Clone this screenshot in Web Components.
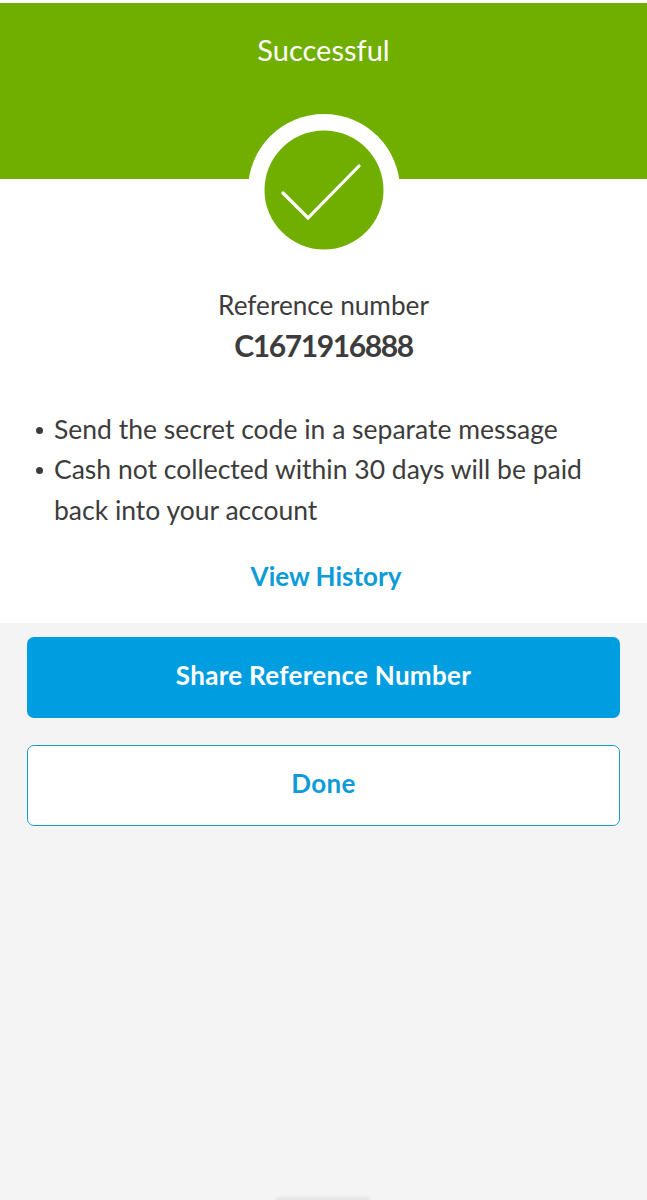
<!DOCTYPE html>
<html>
<head>
<meta charset="utf-8">
<title>Successful</title>
<style>
  html, body { margin: 0; height: 100%; }
  body { background: #f4f4f4; font-family: "Lato", "Liberation Sans", sans-serif; color: #3c3c3c; }
</style>
</head>
<body>
<result-page>
  <result-header title="Successful"></result-header>
  <result-body>
    <ref-number label="Reference number" value="C1671916888"></ref-number>
    <note-list>
      <li>Send the secret code in a separate message</li>
      <li>Cash not collected within 30 days will be paid back into your account</li>
    </note-list>
    <a>View History</a>
  </result-body>
  <action-button kind="primary">Share Reference Number</action-button>
  <action-button kind="outline">Done</action-button>
  <home-bar></home-bar>
</result-page>

<script>
class ResultPage extends HTMLElement {
  constructor() {
    super()
    this.attachShadow({ mode: "open" })
    this.shadowRoot.innerHTML = `
      <style>
        :host { display: flex; flex-direction: column; position: relative; height: 1200px; overflow: hidden; padding-top: 3px; box-sizing: border-box; background: #f4f4f4; }
        .top { height: 3px; background: #fff; position: absolute; top: 0; left: 0; right: 0; }
      </style>
      <div class="top"></div>
      <slot></slot>
    `
  }
}

class ResultHeader extends HTMLElement {
  constructor() {
    super()
    this.attachShadow({ mode: "open" })
    this.shadowRoot.innerHTML = `
      <style>
        :host { display: block; position: relative; height: 176px; background: #70ae00; z-index: 1; }
        h1 { margin: 0; padding-top: 29px; font-size: 29px; line-height: 36px; font-weight: 400; color: #fff; text-align: center; }
        svg { position: absolute; left: 247.5px; top: 111px; }
      </style>
      <h1>${this.getAttribute("title")}</h1>
      <svg width="152" height="152" viewBox="0 0 152 152">
        <circle cx="76" cy="76" r="76" fill="#fff"/>
        <circle cx="76" cy="76" r="59.5" fill="#70ae00"/>
        <path d="M35 79 L60 104 L111 52" fill="none" stroke="#fff" stroke-width="3.2" stroke-linecap="round" stroke-linejoin="miter"/>
      </svg>
    `
  }
}

class ResultBody extends HTMLElement {
  constructor() {
    super()
    this.attachShadow({ mode: "open" })
    this.shadowRoot.innerHTML = `
      <style>
        :host { display: flex; flex-direction: column; height: 444px; box-sizing: border-box; padding-top: 108px; background: #fff; }
        ::slotted(a) { display: block; margin-top: 28px; text-align: center; font-size: 26px; line-height: 36px; font-weight: 700; color: #0e9bd8; padding-left: 5px; }
      </style>
      <slot></slot>
    `
  }
}

class RefNumber extends HTMLElement {
  constructor() {
    super()
    this.attachShadow({ mode: "open" })
    this.shadowRoot.innerHTML = `
      <style>
        :host { display: block; text-align: center; }
        .label { font-size: 26.2px; line-height: 36px; }
        .value { font-size: 30px; line-height: 45px; font-weight: 700; letter-spacing: -1.4px; }
      </style>
      <div class="label">${this.getAttribute("label")}</div>
      <div class="value">${this.getAttribute("value")}</div>
    `
  }
}

class NoteList extends HTMLElement {
  constructor() {
    super()
    this.attachShadow({ mode: "open" })
    this.shadowRoot.innerHTML = `
      <style>
        :host { display: block; margin-top: 41px; padding: 0 54px; font-size: 26.5px; line-height: 40.3px; }
        ::slotted(li) { display: block; position: relative; }
        ::slotted(li)::before { content: ""; position: absolute; left: -18px; top: 18px; width: 7px; height: 7px; border-radius: 50%; background: #3c3c3c; }
      </style>
      <slot></slot>
    `
  }
}

class ActionButton extends HTMLElement {
  constructor() {
    super()
    this.attachShadow({ mode: "open" })
    this.shadowRoot.innerHTML = `
      <style>
        :host { display: flex; align-items: center; justify-content: center; box-sizing: border-box; width: 593px; height: 81px; margin: 14px 0 0 27px; padding-bottom: 6px; border-radius: 7px; font-size: 26px; font-weight: 700; letter-spacing: 0.3px; }
        :host([kind="primary"]) { background: #009de0; color: #fff; }
        :host([kind="outline"]) { height: 81px; margin-top: 27px; background: #fff; border: 1px solid #1a9cc9; color: #0e9bd8; }
      </style>
      <slot></slot>
    `
  }
}

class HomeBar extends HTMLElement {
  constructor() {
    super()
    this.attachShadow({ mode: "open" })
    this.shadowRoot.innerHTML = `
      <style>
        :host { display: block; position: absolute; left: 276px; bottom: -4px; width: 94px; height: 7px; border-radius: 4px; background: #e4e4e4; filter: blur(1.5px); }
      </style>
    `
  }
}

customElements.define("result-page", ResultPage)
customElements.define("result-header", ResultHeader)
customElements.define("result-body", ResultBody)
customElements.define("ref-number", RefNumber)
customElements.define("note-list", NoteList)
customElements.define("action-button", ActionButton)
customElements.define("home-bar", HomeBar)
</script>
</body>
</html>
